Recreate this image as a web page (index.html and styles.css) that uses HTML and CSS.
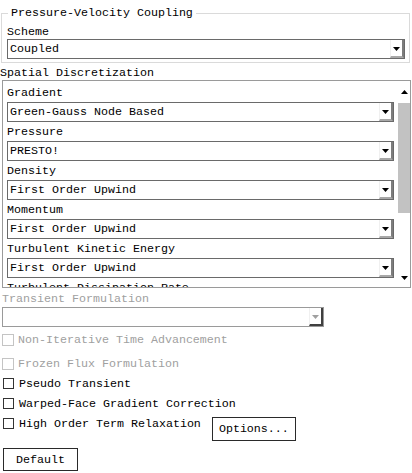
FILE: index.html
```html
<!DOCTYPE html>
<html>
<head>
<meta charset="utf-8">
<link rel="stylesheet" href="styles.css">
</head>
<body>
<div class="page">
  <fieldset class="group">
    <legend class="legend">Pressure-Velocity Coupling</legend>
    <div class="label group-label">Scheme</div>
    <div class="combo">
      <span class="combo-text">Coupled</span>
      <span class="combo-btn"><svg width="7" height="4" viewBox="0 0 7 4"><path d="M0 0h7L3.5 4z" fill="#000"/></svg></span>
    </div>
  </fieldset>

  <div class="section-title">Spatial Discretization</div>
  <div class="panel">
    <div class="panel-content">
      <div class="label">Gradient</div>
      <div class="combo">
        <span class="combo-text">Green-Gauss Node Based</span>
        <span class="combo-btn"><svg width="7" height="4" viewBox="0 0 7 4"><path d="M0 0h7L3.5 4z" fill="#000"/></svg></span>
      </div>
      <div class="label">Pressure</div>
      <div class="combo">
        <span class="combo-text">PRESTO!</span>
        <span class="combo-btn"><svg width="7" height="4" viewBox="0 0 7 4"><path d="M0 0h7L3.5 4z" fill="#000"/></svg></span>
      </div>
      <div class="label">Density</div>
      <div class="combo">
        <span class="combo-text">First Order Upwind</span>
        <span class="combo-btn"><svg width="7" height="4" viewBox="0 0 7 4"><path d="M0 0h7L3.5 4z" fill="#000"/></svg></span>
      </div>
      <div class="label">Momentum</div>
      <div class="combo">
        <span class="combo-text">First Order Upwind</span>
        <span class="combo-btn"><svg width="7" height="4" viewBox="0 0 7 4"><path d="M0 0h7L3.5 4z" fill="#000"/></svg></span>
      </div>
      <div class="label">Turbulent Kinetic Energy</div>
      <div class="combo">
        <span class="combo-text">First Order Upwind</span>
        <span class="combo-btn"><svg width="7" height="4" viewBox="0 0 7 4"><path d="M0 0h7L3.5 4z" fill="#000"/></svg></span>
      </div>
      <div class="label">Turbulent Dissipation Rate</div>
    </div>
    <div class="scrollbar">
      <div class="sb-arrow"><svg width="7" height="4" viewBox="0 0 7 4"><path d="M0 4h7L3.5 0z" fill="#000"/></svg></div>
      <div class="sb-track">
        <div class="sb-thumb"></div>
      </div>
      <div class="sb-arrow sb-down"><svg width="7" height="4" viewBox="0 0 7 4"><path d="M0 0h7L3.5 4z" fill="#000"/></svg></div>
    </div>
  </div>

  <div class="label disabled tf-label">Transient Formulation</div>
  <div class="combo combo-disabled">
    <span class="combo-text"></span>
    <span class="combo-btn"><svg width="7" height="4" viewBox="0 0 7 4"><path d="M0 0h7L3.5 4z" fill="#a0a0a0"/></svg></span>
  </div>

  <div class="checks">
    <div class="check disabled first"><span class="box"></span><span class="ctext">Non-Iterative Time Advancement</span></div>
    <div class="check disabled second"><span class="box"></span><span class="ctext">Frozen Flux Formulation</span></div>
    <div class="check"><span class="box"></span><span class="ctext">Pseudo Transient</span></div>
    <div class="check"><span class="box"></span><span class="ctext">Warped-Face Gradient Correction</span></div>
    <div class="check"><span class="box"></span><span class="ctext">High Order Term Relaxation</span><button class="btn btn-options">Options...</button></div>
  </div>
  <button class="btn btn-default">Default</button>
</div>
</body>
</html>
```
FILE: styles.css
```css
html, body {
  margin: 0;
  padding: 0;
  background: #ffffff;
}
body {
  font-family: "Liberation Mono", "DejaVu Sans Mono", monospace;
  font-size: 11.67px;
  color: #000000;
}
.page {
  width: 412px;
  height: 473px;
  overflow: hidden;
}
.group {
  margin: 6px 2px 0 1px;
  padding: 0 4px 3px 5px;
  border: 1px solid #dadada;
  min-width: 0;
}
.legend {
  margin-left: 1px;
  padding: 0 3px;
  line-height: 14px;
}
.label {
  height: 18px;
  padding-top: 1px;
  line-height: 19px;
  white-space: nowrap;
}
.group-label {
  height: 16px;
  padding-top: 3px;
}
.combo {
  display: flex;
  height: 20px;
  box-sizing: border-box;
  border: 1px solid #6a6a6a;
  background: #fff;
}
.combo-text {
  flex: 1;
  padding-left: 2px;
  line-height: 18px;
  white-space: nowrap;
  overflow: hidden;
}
.combo-btn {
  width: 14px;
  display: flex;
  align-items: center;
  justify-content: center;
  box-sizing: border-box;
  border-right: 2px solid #7d7d7d;
  border-bottom: 2px solid #a8a8a8;
  border-left: 1px solid #f0f0f0;
  padding-top: 1px;
}
.section-title {
  height: 15px;
  line-height: 17px;
  margin-top: 2px;
  white-space: nowrap;
}
.panel {
  display: flex;
  margin-left: 2px;
  margin-right: 1px;
  height: 208px;
  box-sizing: border-box;
  border: 1px solid #9a9a9a;
  overflow: hidden;
}
.panel-content {
  flex: 1;
  padding: 2px 4px 0 4px;
  overflow: hidden;
}
.scrollbar {
  width: 12px;
  display: flex;
  flex-direction: column;
}
.sb-arrow {
  height: 22px;
  display: flex;
  align-items: center;
  justify-content: center;
}
.sb-down {
  height: 14px;
  align-items: flex-start;
  padding-top: 3px;
  box-sizing: border-box;
}
.sb-track {
  flex: 1;
}
.sb-thumb {
  height: 110px;
  background: #c2c2c2;
}
.disabled {
  color: #a0a0a0;
}
.tf-label {
  margin-left: 2px;
  margin-top: 1px;
  height: 17px;
  padding-top: 1px;
  line-height: 19px;
}
.combo-disabled {
  width: 322px;
  margin-left: 2px;
  border-color: #9a9a9a;
}
.combo-disabled .combo-btn {
  border-right-color: #404040;
  border-bottom-color: #404040;
}
.checks {
  margin-top: 3px;
}
.check {
  display: flex;
  align-items: flex-start;
  padding-left: 3px;
  white-space: nowrap;
}
.check.second {
  margin-top: 4px;
}
.ctext {
  height: 20px;
  line-height: 20px;
}
.box {
  width: 11px;
  height: 11px;
  box-sizing: border-box;
  border: 1px solid #333333;
  margin: 4px 5px 0 0;
  background: #fff;
}
.check.disabled .box {
  width: 12px;
  height: 12px;
  margin: 4px 4px 0 -1px;
  border-color: #c4c4c4;
}
.btn {
  font-family: "Liberation Mono", "DejaVu Sans Mono", monospace;
  font-size: 11.67px;
  color: #000;
  background: #fff;
  border: 1px solid #2a2a2a;
  border-radius: 0;
  padding: 0;
  margin: 0;
  height: 24px;
  line-height: 22px;
}
.btn-options {
  width: 84px;
  margin: 3px 0 0 11px;
}
.btn-default {
  display: block;
  width: 75px;
  height: 23px;
  margin: 7px 0 0 3px;
}
```
